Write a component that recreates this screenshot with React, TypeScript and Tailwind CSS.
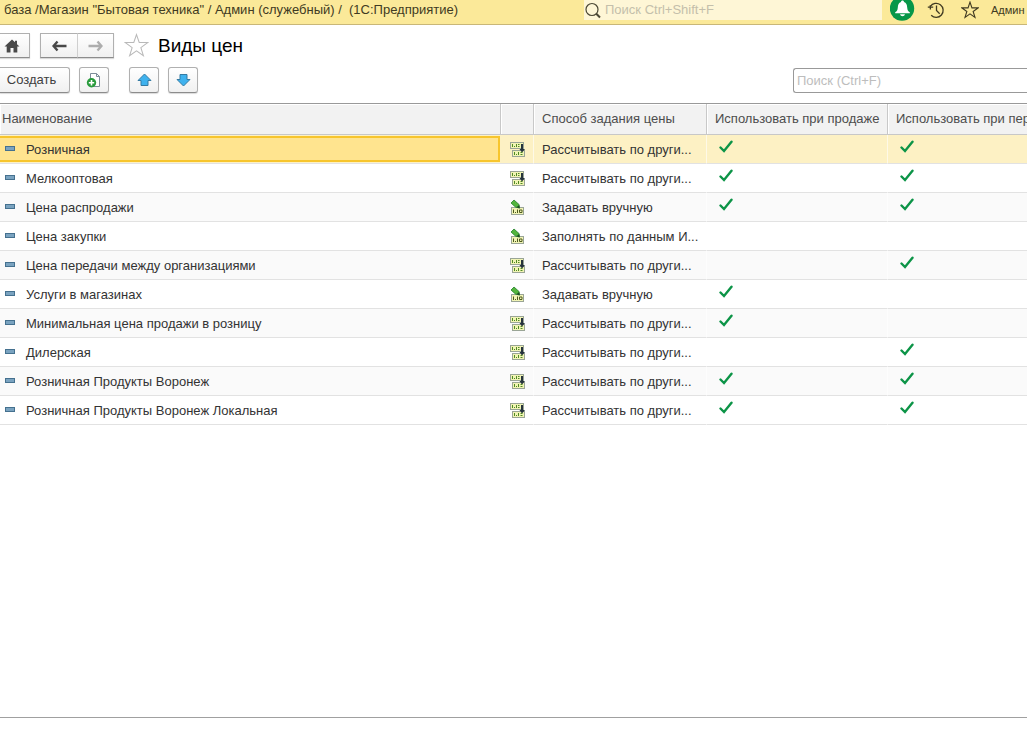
type PriceType = {
  name: string;
  method: string;
  manual?: boolean;
  sale?: boolean;
  transfer?: boolean;
};

const rows: PriceType[] = [
  { name: 'Розничная', method: 'Рассчитывать по други...', sale: true, transfer: true },
  { name: 'Мелкооптовая', method: 'Рассчитывать по други...', sale: true, transfer: true },
  { name: 'Цена распродажи', method: 'Задавать вручную', manual: true, sale: true, transfer: true },
  { name: 'Цена закупки', method: 'Заполнять по данным И...', manual: true },
  { name: 'Цена передачи между организациями', method: 'Рассчитывать по други...', transfer: true },
  { name: 'Услуги в магазинах', method: 'Задавать вручную', manual: true, sale: true },
  { name: 'Минимальная цена продажи в розницу', method: 'Рассчитывать по други...', sale: true },
  { name: 'Дилерская', method: 'Рассчитывать по други...', transfer: true },
  { name: 'Розничная Продукты Воронеж', method: 'Рассчитывать по други...', sale: true, transfer: true },
  { name: 'Розничная Продукты Воронеж Локальная', method: 'Рассчитывать по други...', sale: true, transfer: true },
];

const button = 'flex items-center justify-center border border-[#b0b0b0] border-b-[#8c8c8c] bg-linear-to-b from-white to-[#f0f0f0] shadow-[0_1px_1px_rgba(0,0,0,0.15)]';
const toolButton = button + ' h-[26px] w-[30px] rounded-[3px]';

function Check() {
  return (
    <svg className="block" width="14" height="13" viewBox="0 0 14 13" fill="none" stroke="#0c9447" strokeWidth="2.4" strokeLinecap="round">
      <path d="M1.5 7.5 L5 11 L12.5 1.8" />
    </svg>
  );
}

function Marker() {
  return (
    <svg className="mb-1 shrink-0" width="10" height="5" viewBox="0 0 10 5">
      <rect x="0.5" y="0.5" width="9" height="4" fill="#7aa3c0" stroke="#45718f" />
    </svg>
  );
}

function CalcIcon() {
  return (
    <svg className="block" width="17" height="17" viewBox="0 0 17 17">
      <rect x="1.5" y="1.5" width="13" height="6" fill="#f1f4b4" stroke="#9aa596" />
      <path d="M3.500 3v3M5 5.500h1M7.500 3v3M9 3.500h1.500M9 5.500h1.500" stroke="#4f8a24" fill="none" />
      <rect x="3.500" y="9.500" width="12" height="6" fill="#f1f4b4" stroke="#9aa596" />
      <path d="M5.500 11v3M7 13.500h1M9.500 11v3M11.500 11.500h2M11.500 13.500h2" stroke="#4f8a24" fill="none" />
      <path d="M12 3h2v5h2l-3 3.500L10.500 8H12z" fill="#26333c" />
    </svg>
  );
}

function ManualIcon() {
  return (
    <svg className="block" width="17" height="17" viewBox="0 0 17 17">
      <rect x="2.500" y="8.500" width="12" height="7" fill="#f1f4b4" stroke="#9aa596" />
      <path d="M4.500 10.500v3.500M6 13.500h1M8.500 10.500v3.500M10.500 11h2.500v2.500h-2.500z" stroke="#4d5b20" fill="none" />
      <path d="M2 4L5 1l5 4.500.5 3.500-3.800-.8z" fill="#52b53c" stroke="#23802b" strokeWidth="0.8" />
      <path d="M7.500 8.300l3.300 1.200-.6-3.400z" fill="#1d4a22" />
    </svg>
  );
}

function Star({ size, color }: { size: number; color: string }) {
  return (
    <svg width={size} height={size} viewBox="0 0 24 24" fill="none" stroke={color} strokeWidth={size > 20 ? 1 : 1.5}>
      <path d="M12 1.500 L14.600 9.100 L22.700 9.200 L16.200 14 L18.600 21.800 L12 17.100 L5.400 21.800 L7.800 14 L1.300 9.200 L9.400 9.100 Z" />
    </svg>
  );
}

function TopBar() {
  return (
    <header className="flex h-[25px] items-start overflow-hidden border-b border-[#c9b778] bg-[#fbe999] text-[#403a22]">
      <div className="flex-1 pl-1 text-[13px] leading-5 whitespace-pre">
        {'база /Магазин "Бытовая техника" / Админ (служебный) /  (1С:Предприятие)'}
      </div>
      <label className="flex h-5 w-[298px] items-center gap-1 bg-[#fef6d6]">
        <svg width="17" height="17" viewBox="0 0 17 17" fill="none" stroke="#4c4835">
          <circle cx="8" cy="7.500" r="6" strokeWidth="1.200" />
          <path d="M12.300 11.800 L16 15.500" strokeWidth="2" />
        </svg>
        <input type="search" aria-label="Поиск" placeholder="Поиск Ctrl+Shift+F" className="min-w-0 flex-1 bg-transparent text-[13px] leading-5 outline-none placeholder:text-[#c4bfab]" />
      </label>
      <div className="flex h-5 w-[145px] items-center pl-2">
        <button aria-label="Уведомления" className="mb-1 shrink-0">
          <svg className="block" width="25" height="26" viewBox="0 0 25 26">
            <circle cx="12" cy="13.500" r="12.200" fill="#079748" />
            <path d="M12.500 5.500c.9 0 1.400.6 1.500 1.400 2.300.8 3 2.700 3.200 5.600.2 2.500.8 3.600 2.600 4.800v1H5.200v-1c1.800-1.200 2.400-2.300 2.600-4.800.2-2.900.9-4.800 3.200-5.600.1-.8.600-1.400 1.500-1.400z" fill="#fff" />
            <path d="M10 19.300h5c-.4 1.300-1.300 1.900-2.500 1.900s-2.100-.6-2.500-1.900z" fill="#fff" />
          </svg>
        </button>
        <button aria-label="История" className="ml-3 shrink-0">
          <svg className="block" width="18" height="18" viewBox="0 0 18 18" fill="none" stroke="#403a22" strokeWidth="1.300">
            <path d="M3.300 5.500A7 7 0 1 1 4.200 14.300" />
            <path d="M0.800 6.200h5.400M3.400 8.500L3.200 4.300" />
            <path d="M9.500 4.500v5l3.200 3.200" />
          </svg>
        </button>
        <button aria-label="Избранное" className="ml-4 shrink-0">
          <Star size={18} color="#403a22" />
        </button>
        <span className="ml-3 text-[11px] whitespace-nowrap">Админ</span>
      </div>
    </header>
  );
}

function TitleRow() {
  return (
    <div className="flex h-[25px] items-center">
      <button aria-label="Домой" className={button + ' h-[25px] w-[30px] border-l-0 pr-1.5'}>
        <svg width="16" height="14" viewBox="0 0 16 14" fill="#484848">
          <path d="M8 0.500L0.500 7.500H2.700V13.500H6.500V9H9.500V13.500H13.300V7.500H15.500L13 5.200V1.800H11V3.300Z" />
        </svg>
      </button>
      <div className="ml-2.5 flex">
        <button aria-label="Назад" className={button + ' h-[25px] w-[38px] border-r-[#d4d4d4]'}>
          <svg width="15" height="12" viewBox="0 0 15 12">
            <path d="M5.500 1.500L1.500 6L5.500 10.500M2 6H14.500" fill="none" stroke="#484848" strokeWidth="2.400" />
          </svg>
        </button>
        <button aria-label="Вперед" className={button + ' h-[25px] w-9 border-l-0'}>
          <svg width="15" height="12" viewBox="0 0 15 12">
            <path d="M9.500 1.500L13.500 6L9.500 10.500M13 6H0.500" fill="none" stroke="#adadad" strokeWidth="2.400" />
          </svg>
        </button>
      </div>
      <button aria-label="В избранное" className="ml-2.5">
        <Star size={25} color="#b9b9b9" />
      </button>
      <h1 className="ml-[9px] text-[19px] leading-6 text-black">Виды цен</h1>
    </div>
  );
}

function Toolbar() {
  return (
    <div className="mt-[9px] flex h-[26px] items-center">
      <button className={button + ' h-[26px] w-[70px] rounded-r-[3px] border-l-0 pr-1.5 text-[13px] text-[#404040]'}>Создать</button>
      <button aria-label="Создать копированием" className={toolButton + ' ml-[9px]'}>
        <svg width="16" height="16" viewBox="0 0 16 16">
          <path d="M4.500 1.500H10.500L13.500 4.500V14.500H4.500Z" fill="#fff" stroke="#7d8c99" />
          <path d="M10.500 1.500V4.500H13.500" fill="none" stroke="#7d8c99" />
          <circle cx="5.500" cy="10.800" r="4.700" fill="#289b3c" />
          <path d="M2.800 10.800H8.200M5.500 8.100V13.500" stroke="#fff" strokeWidth="1.600" />
        </svg>
      </button>
      <button aria-label="Переместить вверх" className={toolButton + ' ml-5'}>
        <svg width="15" height="14" viewBox="0 0 15 14">
          <path d="M7.500 1L14 7.500H11V12.500H4V7.500H1Z" fill="#3fb2ee" stroke="#357ba3" strokeLinejoin="round" />
        </svg>
      </button>
      <button aria-label="Переместить вниз" className={toolButton + ' ml-[9px]'}>
        <svg width="15" height="14" viewBox="0 0 15 14">
          <path d="M7.500 13L14 6.500H11V1.500H4V6.500H1Z" fill="#3fb2ee" stroke="#357ba3" strokeLinejoin="round" />
        </svg>
      </button>
      <input type="search" aria-label="Поиск в списке" placeholder="Поиск (Ctrl+F)" className="ml-auto h-[25px] w-[234px] rounded-l-[3px] border border-r-0 border-[#999] px-[3px] text-[13px] text-[#404040] outline-none placeholder:text-[#bdbdbd]" />
    </div>
  );
}

function PriceTable() {
  const th = 'overflow-hidden border-r border-r-[#c8c8c8] px-2 text-left font-normal whitespace-nowrap shadow-[inset_1px_1px_0_#fff]';
  const td = 'border-r border-r-white/60';
  return (
    <table className="w-full table-fixed border-separate border-spacing-0 border-t border-[#999] text-[13px]">
      <colgroup>
        <col className="w-[501px]" />
        <col className="w-[33px]" />
        <col className="w-[173px]" />
        <col className="w-[181px]" />
        <col />
      </colgroup>
      <thead>
        <tr className="h-[31px] bg-[#f2f2f2] text-[#4d4d4d] *:border-b *:border-b-[#c8c8c8]">
          <th className={th + ' pl-0.5'}>Наименование</th>
          <th className={th} aria-label="Вид" />
          <th className={th}>Способ задания цены</th>
          <th className={th}>Использовать при продаже</th>
          <th className="overflow-hidden pl-2 text-left font-normal whitespace-nowrap shadow-[inset_1px_1px_0_#fff]">
            Использовать при передаче
          </th>
        </tr>
      </thead>
      <tbody className="text-[#333]">
        {rows.map((row, i) => (
          <tr
            key={row.name}
            className={
              'h-[29px] *:border-b *:border-b-[#e2e2e2] *:p-0 ' +
              (i === 0 ? 'bg-[#fdf1c4]' : i % 2 === 0 ? 'bg-[#fafafa]' : 'bg-white')
            }
          >
            <td>
              <div
                className={
                  'mr-px flex h-[26px] items-center gap-[11px] border-2 border-l-0 pt-0.5 pl-[5px] ' +
                  (i === 0 ? 'border-[#f7c52d] bg-[#ffe48f]' : 'border-transparent')
                }
              >
                <Marker />
                {row.name}
              </div>
            </td>
            <td className={td}>
              <div className="pl-2">{row.manual ? <ManualIcon /> : <CalcIcon />}</div>
            </td>
            <td className={td + ' whitespace-nowrap'}>
              <div className="pt-0.5 pl-2">{row.method}</div>
            </td>
            <td className={td}>
              <div className="mb-1.5 pl-3">{row.sale && <Check />}</div>
            </td>
            <td>
              <div className="mb-1.5 pl-3">{row.transfer && <Check />}</div>
            </td>
          </tr>
        ))}
      </tbody>
    </table>
  );
}

export default function App() {
  return (
    <div className="flex min-h-screen flex-col overflow-hidden bg-white font-['Liberation_Sans',Arial,sans-serif]">
      <TopBar />
      <main className="flex flex-1 flex-col pt-2">
        <TitleRow />
        <Toolbar />
        <div className="mt-2.5 flex-1 border-b border-[#a0a0a0]">
          <PriceTable />
        </div>
      </main>
      <footer className="h-[27px]" />
    </div>
  );
}
